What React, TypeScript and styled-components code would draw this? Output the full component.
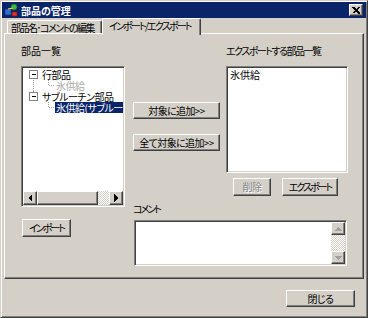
import React from 'react';
import styled, { createGlobalStyle, css } from 'styled-components';

const FACE = '#d4d0c8';
const NAVY = '#0a246a';

const GlobalStyle = createGlobalStyle`
  html, body {
    margin: 0;
    padding: 0;
    background: ${FACE};
  }
  body {
    font-family: "Noto Sans CJK JP", "Noto Sans", sans-serif;
    font-size: 10px;
    font-feature-settings: "palt" 1;
    font-variant-east-asian: proportional-width;
    color: #000;
  }
  * { box-sizing: border-box; }
`;

const raised = css`
  border: 1px solid;
  border-color: #fff #404040 #404040 #fff;
  box-shadow: inset -1px -1px #808080, inset 1px 1px ${FACE};
  background: ${FACE};
`;

const sunken = css`
  border: 1px solid;
  border-color: #808080 #fff #fff #808080;
  box-shadow: inset 1px 1px #404040, inset -1px -1px ${FACE};
  padding: 1px;
`;

const dither = css`
  background-color: ${FACE};
  background-image: repeating-conic-gradient(#fff 0 25%, ${FACE} 0 50%);
  background-size: 2px 2px;
`;

const Window = styled.div`
  width: 368px;
  height: 318px;
  display: flex;
  flex-direction: column;
  border: 1px solid;
  border-color: ${FACE} #404040 #404040 ${FACE};
  box-shadow: inset 1px 1px #fff, inset -1px -1px #808080;
  padding: 1px;
  background: ${FACE};
`;

const TitleBar = styled.div`
  height: 16px;
  flex: none;
  display: flex;
  align-items: center;
  gap: 2px;
  padding: 0 3px 0 2px;
  background: ${NAVY};
  color: #fff;
  font-weight: bold;
  line-height: 12px;
`;

const TitleText = styled.span`
  padding-top: 1px;
`;

const CloseButton = styled.div`
  ${raised};
  margin-left: auto;
  width: 14px;
  height: 12px;
  display: flex;
  align-items: center;
  justify-content: center;
`;

const TabStrip = styled.div`
  height: 15px;
  flex: none;
  display: flex;
  align-items: flex-end;
  padding: 0 4px 0 5px;
  position: relative;
  z-index: 1;
`;

const Tab = styled.div<{ $active?: boolean; $w: number; $ls: number }>`
  width: ${(p) => p.$w}px;
  height: ${(p) => (p.$active ? 17 : 13)}px;
  margin-bottom: ${(p) => (p.$active ? -2 : 0)}px;
  padding: ${(p) => (p.$active ? '1px 0 0 6px' : '1px 0 0 3px')};
  line-height: 11px;
  letter-spacing: ${(p) => p.$ls}px;
  white-space: nowrap;
  border-top: 1px solid #fff;
  border-left: 1px solid #fff;
  border-right: 1px solid #404040;
  box-shadow: inset -1px 0 #808080;
  border-radius: 2px 2px 0 0;
  background: ${FACE};
`;

const Panel = styled.div`
  flex: 1;
  margin: 0 2px;
  border: 1px solid;
  border-color: #fff #404040 #404040 #fff;
  box-shadow: inset -1px -1px #808080;
  padding: 9px 0 0 16px;
  display: grid;
  grid-template-columns: 104px 8px 87px 6px 122px;
  grid-template-rows: 23px 107px 28px 18px 47px;
  grid-template-areas:
    'l1   . .    . l2'
    'tree . mid  . list'
    'tree . .    . acts'
    'tree . cl   . .'
    'imp  . cbox cbox cbox';
`;

const Caption = styled.div<{ $area: string; $ls?: number }>`
  grid-area: ${(p) => p.$area};
  line-height: 12px;
  padding-top: 2px;
  letter-spacing: ${(p) => p.$ls ?? 0}px;
  white-space: nowrap;
`;

const Field = styled.div`
  ${sunken};
  background: #fff;
  overflow: hidden;
`;

const TreeBox = styled(Field)`
  grid-area: tree;
  height: 141px;
  display: flex;
  flex-direction: column;
`;

const TreeBody = styled.div`
  flex: 1;
  padding-top: 1px;
  overflow: hidden;
`;

const TreeRow = styled.div`
  height: 11px;
  display: flex;
  align-items: center;
  white-space: nowrap;
  line-height: 11px;

  & > svg {
    flex: none;
  }
`;

const TreeLabel = styled.span<{ $muted?: boolean; $selected?: boolean }>`
  flex: none;
  padding: 0 1px;
  height: 11px;
  letter-spacing: -0.5px;
  color: ${(p) => (p.$selected ? '#fff' : p.$muted ? '#a8a8a8' : '#000')};
  background: ${(p) => (p.$selected ? NAVY : 'transparent')};
`;

const HScroll = styled.div`
  height: 14px;
  flex: none;
  display: flex;
  ${dither};
`;

const VScroll = styled.div`
  width: 14px;
  flex: none;
  display: flex;
  flex-direction: column;
  justify-content: space-between;
  ${dither};
`;

const ArrowBox = styled.div<{ $h?: number }>`
  ${raised};
  width: 14px;
  height: ${(p) => p.$h ?? 14}px;
  flex: none;
  display: flex;
  align-items: center;
  justify-content: center;
`;

const Thumb = styled.div<{ $w: number }>`
  ${raised};
  width: ${(p) => p.$w}px;
  flex: none;
`;

const Track = styled.div`
  flex: 1;
`;

const MidColumn = styled.div`
  grid-area: mid;
  display: flex;
  flex-direction: column;
  gap: 15px;
  padding-top: 36px;
`;

const Button = styled.button<{ $w?: number; $h?: number; $ls?: number }>`
  ${raised};
  width: ${(p) => (p.$w ? `${p.$w}px` : '100%')};
  height: ${(p) => p.$h ?? 17}px;
  padding: 0;
  font: inherit;
  font-feature-settings: "palt" 1;
  font-variant-east-asian: proportional-width;
  line-height: 12px;
  letter-spacing: ${(p) => p.$ls ?? -0.6}px;
  color: #000;
  white-space: nowrap;

  &:disabled {
    color: #808080;
    text-shadow: 1px 1px #fff;
  }
`;

const ExportList = styled(Field)`
  grid-area: list;
  padding: 2px 3px;
  line-height: 11px;
`;

const ExportActions = styled.div`
  grid-area: acts;
  display: flex;
  gap: 11px;
  padding: 5px 0 0 7px;
`;

const ImportCell = styled.div`
  grid-area: imp;
  padding-left: 1px;
`;

const CommentBox = styled(Field)`
  grid-area: cbox;
  margin: 1px 1px 0 1px;
  height: 46px;
  display: flex;
  justify-content: flex-end;
`;

const Footer = styled.div`
  height: 37px;
  flex: none;
  display: flex;
  justify-content: flex-end;
  align-items: flex-start;
  padding: 11px 11px 0 0;
`;

type Dir = 'left' | 'right' | 'up' | 'down';

const Arrow: React.FC<{ dir: Dir; muted?: boolean }> = ({ dir, muted }) => {
  const pts: Record<Dir, string> = {
    left: '5,0 5,8 1,4',
    right: '1,0 1,8 5,4',
    up: '0,5 8,5 4,1',
    down: '0,1 8,1 4,5',
  };
  const w = dir === 'left' || dir === 'right' ? 6 : 8;
  const h = dir === 'left' || dir === 'right' ? 8 : 6;
  return (
    <svg width={w} height={h} viewBox={`0 0 ${w} ${h}`} shapeRendering="crispEdges">
      <polygon points={pts[dir]} fill={muted ? '#a0a0a0' : '#000'} />
    </svg>
  );
};

const LINE = '#a0a0a0';

// tree connectors: x offsets measured from the inner left of the tree box
const Expander: React.FC<{ above?: boolean; below?: boolean }> = ({ above, below }) => (
  <svg width={18} height={11} shapeRendering="crispEdges">
    {above && <line x1={10.5} y1={0} x2={10.5} y2={2} stroke={LINE} />}
    {below && <line x1={10.5} y1={9} x2={10.5} y2={11} stroke={LINE} strokeDasharray="1 1" />}
    <rect x={6.5} y={1.5} width={8} height={8} fill="#fff" stroke="#808080" />
    <line x1={8.5} y1={5.5} x2={13} y2={5.5} stroke="#000" />
  </svg>
);

const Branch: React.FC<{ trunk?: boolean }> = ({ trunk }) => (
  <svg width={32} height={11} shapeRendering="crispEdges">
    {trunk && <line x1={10.5} y1={0} x2={10.5} y2={11} stroke={LINE} strokeDasharray="1 1" />}
    <line x1={25.5} y1={0} x2={25.5} y2={6} stroke={LINE} strokeDasharray="1 1" />
    <line x1={25.5} y1={5.5} x2={32} y2={5.5} stroke={LINE} strokeDasharray="1 1" />
  </svg>
);

const AppIcon = () => (
  <svg width={15} height={14} viewBox="0 0 15 14">
    <rect x={1} y={6} width={6} height={6} fill="#2a6fd0" stroke="#0b2f7a" strokeWidth={0.6} />
    <circle cx={10} cy={4} r={3} fill="#3cb54a" stroke="#13621c" strokeWidth={0.6} />
    <rect x={8} y={9} width={5} height={4} fill="#d8322c" stroke="#7a1010" strokeWidth={0.6} />
    <path d="M4 6 L9 5" stroke="#ffd23a" strokeWidth={1.2} />
  </svg>
);

const CloseGlyph = () => (
  <svg width={8} height={7} viewBox="0 0 8 7" shapeRendering="crispEdges">
    <path d="M0.5 0 L7 6.5 M1.5 0 L8 6.5 M7 0 L0.5 6.5 M8 0 L1.5 6.5" stroke="#000" strokeWidth={1} />
  </svg>
);

const App: React.FC = () => {
  return (
    <>
      <GlobalStyle />
      <Window>
        <TitleBar>
          <AppIcon />
          <TitleText>部品の管理</TitleText>
          <CloseButton>
            <CloseGlyph />
          </CloseButton>
        </TitleBar>

        <TabStrip>
          <Tab $w={95} $ls={-1.5}>
            部品名･コメントの編集
          </Tab>
          <Tab $active $w={99} $ls={-1.8}>
            インポート/エクスポート
          </Tab>
        </TabStrip>

        <Panel>
          <Caption $area="l1">部品一覧</Caption>
          <Caption $area="l2" $ls={-1.5}>
            エクスポートする部品一覧
          </Caption>

          <TreeBox>
            <TreeBody>
              <TreeRow>
                <Expander below />
                <TreeLabel>行部品</TreeLabel>
              </TreeRow>
              <TreeRow>
                <Branch trunk />
                <TreeLabel $muted>氷供給</TreeLabel>
              </TreeRow>
              <TreeRow>
                <Expander above />
                <TreeLabel>サブルーチン部品</TreeLabel>
              </TreeRow>
              <TreeRow>
                <Branch />
                <TreeLabel $selected>氷供給(サブルーチン部品)</TreeLabel>
              </TreeRow>
            </TreeBody>
            <HScroll>
              <ArrowBox>
                <Arrow dir="left" />
              </ArrowBox>
              <Thumb $w={61} />
              <Track />
              <ArrowBox>
                <Arrow dir="right" />
              </ArrowBox>
            </HScroll>
          </TreeBox>

          <MidColumn>
            <Button>対象に追加&gt;&gt;</Button>
            <Button>全て対象に追加&gt;&gt;</Button>
          </MidColumn>

          <ExportList>氷供給</ExportList>

          <ExportActions>
            <Button $w={38} $h={18} disabled>
              削除
            </Button>
            <Button $w={56} $h={18} $ls={-2}>
              エクスポート
            </Button>
          </ExportActions>

          <Caption $area="cl" $ls={-2}>
            コメント
          </Caption>

          <ImportCell>
            <Button $w={49} $h={18} $ls={-2}>
              インポート
            </Button>
          </ImportCell>

          <CommentBox>
            <VScroll>
              <ArrowBox $h={13}>
                <Arrow dir="up" muted />
              </ArrowBox>
              <ArrowBox $h={13}>
                <Arrow dir="down" muted />
              </ArrowBox>
            </VScroll>
          </CommentBox>
        </Panel>

        <Footer>
          <Button $w={69}>閉じる</Button>
        </Footer>
      </Window>
    </>
  );
};

export default App;
